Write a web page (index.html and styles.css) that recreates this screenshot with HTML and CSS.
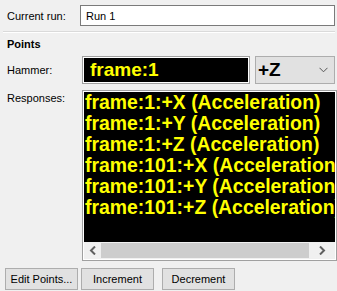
FILE: index.html
```html
<!DOCTYPE html>
<html lang="en">
<head>
    <meta charset="UTF-8">
    <title>Points</title>
    <link rel="stylesheet" href="styles.css">
</head>
<body>
    <div class="panel">
        <div class="row run-row">
            <label class="label" for="run">Current run:</label>
            <input type="text" id="run" class="run-input" value="Run 1">
        </div>
        <div class="divider"></div>

        <div class="section-title">Points</div>

        <div class="row hammer-row">
            <span class="label">Hammer:</span>
            <div class="hammer-box">frame:1</div>
            <div class="dir-select">
                <span>+Z</span>
                <svg class="caret" width="9" height="6" viewBox="0 0 9 6"><path d="M0.5 0.8 L4.5 4.8 L8.5 0.8" fill="none" stroke="#555" stroke-width="1"/></svg>
            </div>
        </div>

        <div class="row resp-row">
            <span class="label">Responses:</span>
            <div class="resp-box">
                <div class="resp-list">
                    <div>frame:1:+X (Acceleration)</div>
                    <div>frame:1:+Y (Acceleration)</div>
                    <div>frame:1:+Z (Acceleration)</div>
                    <div>frame:101:+X (Acceleration)</div>
                    <div>frame:101:+Y (Acceleration)</div>
                    <div>frame:101:+Z (Acceleration)</div>
                </div>
                <div class="hscroll">
                    <span class="arrow">
                        <svg width="8" height="9" viewBox="0 0 8 9"><path d="M6 0.5 L2 4.5 L6 8.5" fill="none" stroke="#606060" stroke-width="2"/></svg>
                    </span>
                    <span class="thumb"></span>
                    <span class="arrow">
                        <svg width="8" height="9" viewBox="0 0 8 9"><path d="M2 0.5 L6 4.5 L2 8.5" fill="none" stroke="#606060" stroke-width="2"/></svg>
                    </span>
                </div>
            </div>
        </div>

        <div class="buttons">
            <button class="btn">Edit Points...</button>
            <button class="btn">Increment</button>
            <button class="btn gap">Decrement</button>
        </div>
    </div>
</body>
</html>
```

FILE: styles.css
```css
body {
    margin: 0;
    padding: 0;
    background-color: #f0f0f0;
    font-family: "Liberation Sans", Arial, sans-serif;
    font-size: 11px;
    color: #000;
}

.panel {
    width: 337px;
    height: 291px;
    padding: 5px 2px 0 5px;
    box-sizing: border-box;
    overflow: hidden;
}

.row {
    display: flex;
    align-items: center;
}

.label {
    width: 73px;
    padding-left: 2px;
    flex: none;
}

.run-input {
    width: 257px;
    height: 21px;
    box-sizing: border-box;
    border: 1px solid #7a7a7a;
    background-color: #fff;
    font-family: "Liberation Sans", Arial, sans-serif;
    font-size: 11px;
    padding: 0 5px;
    margin: 0;
    outline: none;
}

.divider {
    margin: 5px 0 0 -2px;
    height: 1px;
    background-color: #dadada;
    border-bottom: 1px solid #fff;
}

.section-title {
    font-weight: bold;
    padding-left: 2px;
    margin-top: 4px;
    height: 14px;
    line-height: 14px;
}

.hammer-row {
    margin-top: 5px;
}

.hammer-box {
    width: 168px;
    height: 28px;
    box-sizing: border-box;
    margin-left: 2px;
    border: 1px solid #a0a0a0;
    outline: 1px solid #fff;
    outline-offset: -2px;
    background-color: #000;
    color: #ffff00;
    font-size: 19px;
    font-weight: bold;
    line-height: 26px;
    padding-left: 7px;
}

.dir-select {
    width: 80px;
    height: 28px;
    box-sizing: border-box;
    margin-left: 5px;
    border: 1px solid #adadad;
    background-color: #e1e1e1;
    display: flex;
    align-items: center;
    justify-content: space-between;
    padding: 0 6px 0 2px;
    font-size: 19px;
    font-weight: bold;
}

.resp-row {
    margin-top: 6px;
    align-items: flex-start;
}

.resp-row .label {
    padding-top: 2px;
}

.resp-box {
    width: 255px;
    height: 171px;
    margin-left: 2px;
    box-sizing: border-box;
    border: 1px solid #a0a0a0;
    padding: 1px;
    background-color: #fff;
    display: flex;
    flex-direction: column;
}

.resp-list {
    flex: 1;
    background-color: #000;
    color: #ffff00;
    font-size: 19.4px;
    font-weight: bold;
    line-height: 21px;
    padding-left: 1px;
    white-space: nowrap;
    overflow: hidden;
}

.hscroll {
    height: 17px;
    display: flex;
    align-items: center;
    background-color: #f0f0f0;
}

.arrow {
    width: 17px;
    height: 17px;
    display: flex;
    align-items: center;
    justify-content: center;
    flex: none;
}

.arrow:last-child {
    width: 26px;
}

.thumb {
    flex: 1;
    height: 15px;
    background-color: #cdcdcd;
}

.buttons {
    display: flex;
    margin-top: 7px;
}

.btn {
    height: 22px;
    width: 73px;
    margin: 0 3px 0 0;
    padding: 0;
    border: 1px solid #adadad;
    background-color: #e1e1e1;
    font-family: "Liberation Sans", Arial, sans-serif;
    font-size: 11px;
    color: #000;
}

.btn.gap {
    margin-left: 5px;
}
```
